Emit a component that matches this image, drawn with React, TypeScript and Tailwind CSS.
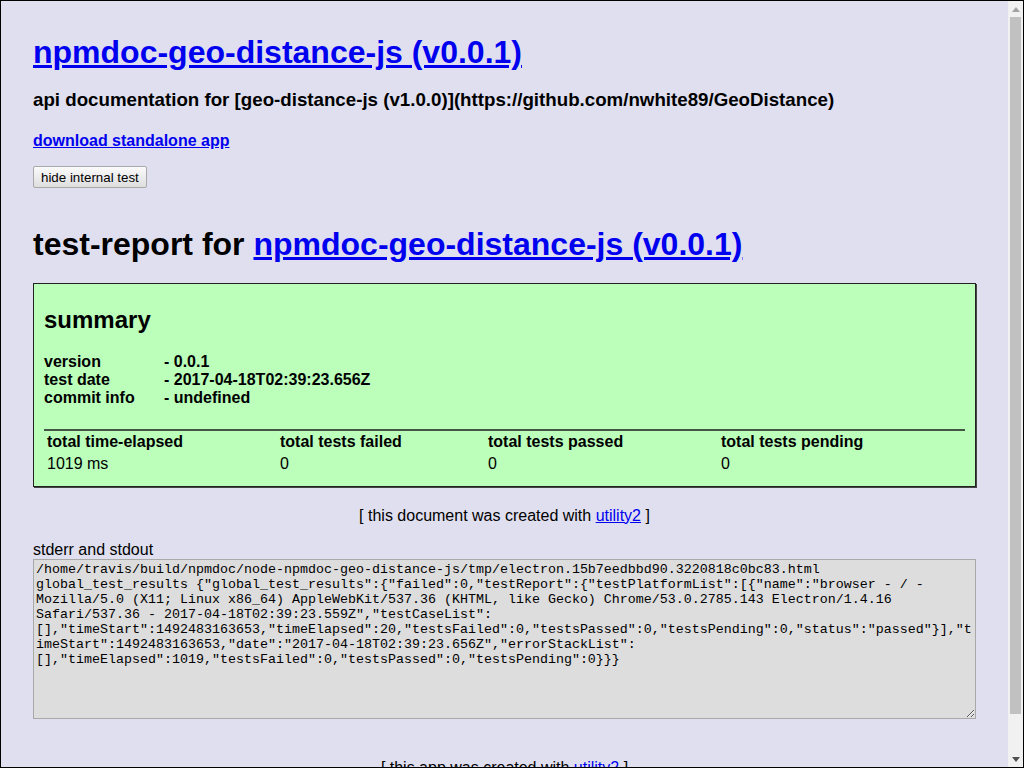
const STDOUT = [
  '/home/travis/build/npmdoc/node-npmdoc-geo-distance-js/tmp/electron.15b7eedbbd90.3220818c0bc83.html',
  'global_test_results {"global_test_results":{"failed":0,"testReport":{"testPlatformList":[{"name":"browser - / -',
  'Mozilla/5.0 (X11; Linux x86_64) AppleWebKit/537.36 (KHTML, like Gecko) Chrome/53.0.2785.143 Electron/1.4.16',
  'Safari/537.36 - 2017-04-18T02:39:23.559Z","testCaseList":',
  '[],"timeStart":1492483163653,"timeElapsed":20,"testsFailed":0,"testsPassed":0,"testsPending":0,"status":"passed"}],"t',
  'imeStart":1492483163653,"date":"2017-04-18T02:39:23.656Z","errorStackList":',
  '[],"timeElapsed":1019,"testsFailed":0,"testsPassed":0,"testsPending":0}}}',
].join('\n')

const INFO = [
  { label: 'version', value: '- 0.0.1' },
  { label: 'test date', value: '- 2017-04-18T02:39:23.656Z' },
  { label: 'commit info', value: '- undefined' },
]

const TOTALS = [
  { label: 'total time-elapsed', value: '1019 ms' },
  { label: 'total tests failed', value: '0' },
  { label: 'total tests passed', value: '0' },
  { label: 'total tests pending', value: '0' },
]

function Scrollbar() {
  return (
    <div className="w-[15px] shrink-0 bg-[#f1f1f1] flex flex-col">
      <div className="h-[16px] flex items-center justify-center">
        <svg width="8" height="5" viewBox="0 0 8 5"><path d="M4 0 L8 5 L0 5 Z" fill="#a3a3a3" /></svg>
      </div>
      <div className="h-[697px] px-[2px]">
        <div className="h-full bg-[#c1c1c1]" />
      </div>
      <div className="flex-1 flex items-end justify-center pb-[5px]">
        <svg width="8" height="5" viewBox="0 0 8 5"><path d="M0 0 L8 0 L4 5 Z" fill="#505050" /></svg>
      </div>
    </div>
  )
}

export default function App() {
  return (
    <div className="h-[768px] w-[1024px] border border-black flex overflow-hidden" style={{ fontFamily: '"Liberation Sans", Arial, sans-serif' }}>
      <div className="flex-1 overflow-hidden bg-[#dfdfef] text-black px-[32px]">
        {/* header */}
        <h1 className="mt-[33px] text-[32px] leading-[37px] font-bold">
          <a href="#" className="text-[#0000ee] underline">npmdoc-geo-distance-js (v0.0.1)</a>
        </h1>
        <h3 className="mt-[18px] text-[18.72px] leading-[22px] font-bold">
          api documentation for [geo-distance-js (v1.0.0)](https://github.com/nwhite89/GeoDistance)
        </h3>
        <h4 className="mt-[21px] text-[16px] leading-[18px] font-bold">
          <a href="#" className="text-[#0000ee] underline">download standalone app</a>
        </h4>
        <button className="mt-[16px] h-[22px] px-[7px] text-[13.333px] leading-[15px] border border-[#a9a9a9] rounded-[2px] bg-gradient-to-b from-[#fbfbfb] to-[#dedede] text-black">
          hide internal test
        </button>

        {/* test report */}
        <h1 className="mt-[37px] text-[32px] leading-[37px] font-bold">
          test-report for <a href="#" className="text-[#0000ee] underline">npmdoc-geo-distance-js (v0.0.1)</a>
        </h1>
        <div className="mt-[20px] border border-[#222] shadow-[1px_1px_0_#444] bg-[#bbffbb] px-[10px] pt-[11px] pb-[11px]">
          <h2 className="mt-[11px] text-[24px] leading-[28px] font-bold">summary</h2>
          <div className="mt-[19px] grid grid-cols-[120px_1fr] text-[16px] leading-[18px] font-bold">
            {INFO.map(r => (
              <div key={r.label} className="contents">
                <div>{r.label}</div>
                <div>{r.value}</div>
              </div>
            ))}
          </div>
          <div className="mt-[22px] border-t-2 border-[#445544] grid grid-cols-[233px_208px_233px_1fr] text-[16px] leading-[18px]">
            {TOTALS.map(t => (
              <div key={t.label} className="pl-[3px] pt-[2px] font-bold">{t.label}</div>
            ))}
            {TOTALS.map(t => (
              <div key={t.label} className="pl-[3px] pt-[4px] pb-[2px]">{t.value}</div>
            ))}
          </div>
        </div>

        <p className="mt-[20px] text-center text-[16px] leading-[18px]">
          [ this document was created with <a href="#" className="text-[#0000ee] underline">utility2</a> ]
        </p>

        <div className="mt-[16px] text-[16px] leading-[18px]">stderr and stdout</div>
        <textarea
          readOnly
          value={STDOUT}
          className="block w-full h-[160px] bg-[#dddddd] border border-[#a9a9a9] p-[2px] text-[13.333px] leading-[15px] text-black outline-none"
          style={{ fontFamily: '"Liberation Mono", "Courier New", monospace' }}
        />

        <p className="mt-[40px] text-center text-[16px] leading-[18px]">
          [ this app was created with <a href="#" className="text-[#0000ee] underline">utility2</a> ]
        </p>
      </div>
      <Scrollbar />
    </div>
  )
}
